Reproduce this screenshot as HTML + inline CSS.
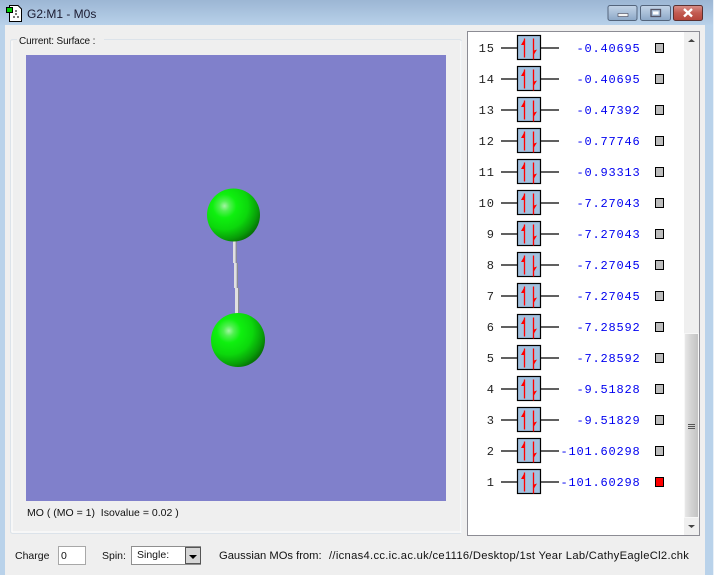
<!DOCTYPE html>
<html><head><meta charset="utf-8">
<style>
html,body{margin:0;padding:0;background:#fff}
#w{position:relative;width:714px;height:575px;overflow:hidden;font-family:"Liberation Sans",sans-serif}
svg{position:absolute;left:0;top:0}
text{font-family:"Liberation Sans",sans-serif;font-size:10.5px;fill:#111}
.m{font-family:"Liberation Mono",monospace;font-size:12px}
.e{fill:#0000f0;letter-spacing:.8px;text-anchor:end}
.n{fill:#222;letter-spacing:1px;text-anchor:end}
</style></head><body><div id="w">
<svg width="714" height="575" viewBox="0 0 714 575">
<defs>
<linearGradient id="t" x1="0" y1="0" x2="0" y2="1"><stop offset="0" stop-color="#9cb6d4"/><stop offset="1" stop-color="#b9d2ea"/></linearGradient>
<linearGradient id="btn" x1="0" y1="0" x2="0" y2="1"><stop offset="0" stop-color="#c3d4e7"/><stop offset=".5" stop-color="#a9bfd8"/><stop offset="1" stop-color="#8ba6c6"/></linearGradient>
<linearGradient id="cl" x1="0" y1="0" x2="0" y2="1"><stop offset="0" stop-color="#d9908a"/><stop offset=".5" stop-color="#c25a50"/><stop offset="1" stop-color="#b5443a"/></linearGradient>
<linearGradient id="sb" x1="0" y1="0" x2="1" y2="0"><stop offset="0" stop-color="#e9e9e9"/><stop offset=".5" stop-color="#d2d2d2"/><stop offset="1" stop-color="#c2c2c2"/></linearGradient>
<radialGradient id="ball" gradientUnits="objectBoundingBox" cx=".33" cy=".33" r=".8"><stop offset="0" stop-color="#a4f4a4"/><stop offset=".12" stop-color="#50f050"/><stop offset=".28" stop-color="#0ff00f"/><stop offset=".55" stop-color="#0cd80c"/><stop offset=".78" stop-color="#089f08"/><stop offset=".95" stop-color="#056505"/></radialGradient>
<g id="box">
<path d="M-16 0H0M24 0H42" stroke="#000" stroke-width="1.2" fill="none"/>
<rect x=".5" y="-12.500" width="23" height="24" fill="#a3c2e0" stroke="#000" stroke-width="1.2"/>
<path d="M7.500-9.500V9.500M16.500-9.500V11.500" stroke="#f00" stroke-width="1.300" fill="none"/>
<path d="M7.500-9L4-3H8ZM16 8L20 1.500L17 2.500H16Z" fill="#f00"/>
</g>
</defs>
<rect width="714" height="575" fill="#b9d2ea"/>
<rect width="714" height="26" fill="url(#t)"/>
<rect x="713" y="0" width="1" height="575" fill="#e8f0f8"/>
<rect x="5" y="25" width="700" height="550" fill="#efefef"/>

<!-- title icon -->
<path d="M9.500 5.500H18L21.500 9V21.500H9.500Z" fill="#fff" stroke="#000"/>
<rect x="6.500" y="7.500" width="6" height="5" fill="#0c0" stroke="#000"/>
<path d="M15 10h2v2h-2zM15 13h2v2h-2zM13 16h2v2h-2zM17 16h2v2h-2z" fill="#777"/>
<text x="27" y="18" style="font-size:12px;fill:#1a1a30">G2:M1 - M0s</text>

<!-- window buttons -->
<rect x="608" y="5.500" width="29" height="15" rx="2" fill="url(#btn)" stroke="#54657c"/>
<rect x="618" y="13.500" width="10" height="3" fill="#f4f4f4" stroke="#445" stroke-width=".6"/>
<rect x="640.500" y="5.500" width="30" height="15" rx="2" fill="url(#btn)" stroke="#54657c"/>
<rect x="651" y="9.500" width="9.500" height="7" fill="none" stroke="#556" stroke-width="1.300"/>
<rect x="653" y="11.500" width="5.500" height="3" fill="#fff"/>
<rect x="673.500" y="5.500" width="29" height="15" rx="2" fill="url(#cl)" stroke="#5a3030"/>
<path d="M684 9L692 16.500M692 9L684 16.500" stroke="#fff" stroke-width="2.400"/>

<!-- group box -->
<rect x="10.500" y="39.500" width="451" height="494" rx="2" fill="#efefef" stroke="#dce3ea"/>
<path d="M12 41V532M12 532H461M461 41V533" stroke="#fff" fill="none"/>
<rect x="17" y="34" width="87" height="11" fill="#efefef"/>
<text x="19" y="44" style="font-size:10px;letter-spacing:-.15px">Current: Surface :</text>
<rect x="26" y="55" width="420" height="446" fill="#8080cb"/>

<!-- molecule -->
<rect x="233" y="241" width="2.700" height="22" fill="#e0e0e0"/><rect x="235.700" y="241" width="1.100" height="22" fill="#8a8a92"/>
<rect x="234" y="263" width="2.800" height="25" fill="#e0e0e0"/><rect x="236.800" y="263" width="1.200" height="25" fill="#8a8a92"/>
<rect x="235" y="288" width="3" height="27" fill="#e0e0e0"/><rect x="238" y="288" width="1.200" height="27" fill="#8a8a92"/>
<circle cx="233.500" cy="215" r="26.500" fill="url(#ball)"/>
<circle cx="238" cy="340" r="27" fill="url(#ball)"/>
<text x="27" y="516">MO ( (MO = 1)&#160; Isovalue = 0.02 )</text>

<!-- MO panel -->
<rect x="467.500" y="31.500" width="232" height="504" fill="#fff" stroke="#8c8c94"/>
<rect x="684" y="32" width="15" height="503" fill="#efefef"/>
<rect x="684.500" y="333.500" width="14" height="184" fill="url(#sb)" stroke="#f7f7f7"/>
<path d="M688 424.500h7M688 426.500h7M688 428.500h7" stroke="#555"/>
<path d="M688 42L691.500 39L695 42Z" fill="#444"/>
<path d="M688 525H695L691.500 528Z" fill="#444"/>

<g>
<text class="m n" x="495" y="52">15</text><use href="#box" x="517" y="48"/><text class="m e" x="640.500" y="52">-0.40695</text><rect x="655.500" y="43.500" width="8" height="9" fill="#bcbcbc" stroke="#000"/>
<text class="m n" x="495" y="83">14</text><use href="#box" x="517" y="79"/><text class="m e" x="640.500" y="83">-0.40695</text><rect x="655.500" y="74.500" width="8" height="9" fill="#bcbcbc" stroke="#000"/>
<text class="m n" x="495" y="114">13</text><use href="#box" x="517" y="110"/><text class="m e" x="640.500" y="114">-0.47392</text><rect x="655.500" y="105.500" width="8" height="9" fill="#bcbcbc" stroke="#000"/>
<text class="m n" x="495" y="145">12</text><use href="#box" x="517" y="141"/><text class="m e" x="640.500" y="145">-0.77746</text><rect x="655.500" y="136.500" width="8" height="9" fill="#bcbcbc" stroke="#000"/>
<text class="m n" x="495" y="176">11</text><use href="#box" x="517" y="172"/><text class="m e" x="640.500" y="176">-0.93313</text><rect x="655.500" y="167.500" width="8" height="9" fill="#bcbcbc" stroke="#000"/>
<text class="m n" x="495" y="207">10</text><use href="#box" x="517" y="203"/><text class="m e" x="640.500" y="207">-7.27043</text><rect x="655.500" y="198.500" width="8" height="9" fill="#bcbcbc" stroke="#000"/>
<text class="m n" x="495" y="238">9</text><use href="#box" x="517" y="234"/><text class="m e" x="640.500" y="238">-7.27043</text><rect x="655.500" y="229.500" width="8" height="9" fill="#bcbcbc" stroke="#000"/>
<text class="m n" x="495" y="269">8</text><use href="#box" x="517" y="265"/><text class="m e" x="640.500" y="269">-7.27045</text><rect x="655.500" y="260.500" width="8" height="9" fill="#bcbcbc" stroke="#000"/>
<text class="m n" x="495" y="300">7</text><use href="#box" x="517" y="296"/><text class="m e" x="640.500" y="300">-7.27045</text><rect x="655.500" y="291.500" width="8" height="9" fill="#bcbcbc" stroke="#000"/>
<text class="m n" x="495" y="331">6</text><use href="#box" x="517" y="327"/><text class="m e" x="640.500" y="331">-7.28592</text><rect x="655.500" y="322.500" width="8" height="9" fill="#bcbcbc" stroke="#000"/>
<text class="m n" x="495" y="362">5</text><use href="#box" x="517" y="358"/><text class="m e" x="640.500" y="362">-7.28592</text><rect x="655.500" y="353.500" width="8" height="9" fill="#bcbcbc" stroke="#000"/>
<text class="m n" x="495" y="393">4</text><use href="#box" x="517" y="389"/><text class="m e" x="640.500" y="393">-9.51828</text><rect x="655.500" y="384.500" width="8" height="9" fill="#bcbcbc" stroke="#000"/>
<text class="m n" x="495" y="424">3</text><use href="#box" x="517" y="420"/><text class="m e" x="640.500" y="424">-9.51829</text><rect x="655.500" y="415.500" width="8" height="9" fill="#bcbcbc" stroke="#000"/>
<text class="m n" x="495" y="455">2</text><use href="#box" x="517" y="451"/><text class="m e" x="640.500" y="455">-101.60298</text><rect x="655.500" y="446.500" width="8" height="9" fill="#bcbcbc" stroke="#000"/>
<text class="m n" x="495" y="486">1</text><use href="#box" x="517" y="482"/><text class="m e" x="640.500" y="486">-101.60298</text><rect x="655.500" y="477.500" width="8" height="9" fill="#f00" stroke="#000"/>
</g>

<!-- bottom controls -->
<text x="15" y="559">Charge</text>
<rect x="58.500" y="546.500" width="27" height="18" fill="#fff" stroke="#a8a8a8"/>
<text x="61" y="559">0</text>
<text x="102" y="559">Spin:</text>
<rect x="131.500" y="546.500" width="69" height="18" fill="#fff" stroke="#8f8f8f"/>
<text x="137" y="558">Single:</text>
<rect x="185.500" y="547.500" width="15" height="16" fill="#d6d6d6" stroke="#555"/>
<path d="M189 555H197L193 559Z" fill="#000"/>
<text x="219" y="559" style="font-size:11.200px">Gaussian MOs from:</text>
<text x="329" y="559" style="font-size:11.200px;letter-spacing:.31px">//icnas4.cc.ic.ac.uk/ce1116/Desktop/1st Year Lab/CathyEagleCl2.chk</text>
</svg>
</div></body></html>
